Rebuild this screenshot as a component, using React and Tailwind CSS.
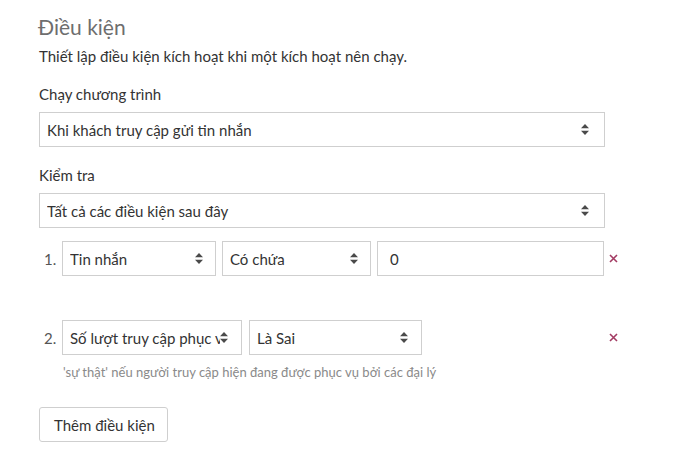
import React from "react";

function Arrows() {
  return (
    <svg width="8" height="11" viewBox="0 0 8 11" className="shrink-0 fill-[#4a4a4a]">
      <path d="M4 0L8 4.3H0Z" />
      <path d="M4 11L8 6.7H0Z" />
    </svg>
  );
}

function Remove() {
  return (
    <svg width="9" height="9" viewBox="0 0 9 9" className="shrink-0 stroke-[#a33b63]" strokeWidth="1.6">
      <path d="M1 1L8 8M8 1L1 8" />
    </svg>
  );
}

function Select({ value, className = "", pr = "pr-[12px]" }) {
  return (
    <div className={`flex h-[35px] items-center border border-[#cfcfcf] bg-white pl-[7px] ${pr} ${className}`}>
      <span className="min-w-0 flex-1 overflow-hidden whitespace-nowrap">{value}</span>
      <Arrows />
    </div>
  );
}

export default function App() {
  return (
    <div className="min-h-screen bg-white pl-[39px] pt-[13px] font-['Lato',sans-serif] text-[15px] leading-[20px] text-[#333]">
      <div className="w-[566px]">
        <h2 className="-ml-px text-[21px] leading-[28px] text-[#6e6e6e]">Điều kiện</h2>
        <p className="mt-[5px]">Thiết lập điều kiện kích hoạt khi một kích hoạt nên chạy.</p>

        <div className="mt-[18px]">Chạy chương trình</div>
        <Select className="mt-[8px] w-full" pr="pr-[15px]" value="Khi khách truy cập gửi tin nhắn" />

        <div className="mt-[18px]">Kiểm tra</div>
        <Select className="mt-[8px] w-full" pr="pr-[15px]" value="Tất cả các điều kiện sau đây" />
      </div>

      {/* condition rows */}
      <div className="mt-[13px] flex items-center">
        <span className="w-[23px] pl-[5px] text-[#555]">1.</span>
        <div className="flex w-[543px]">
          <Select className="w-[154px]" value="Tin nhắn" />
          <Select className="ml-[6px] w-[149px]" value="Có chứa" />
          <div className="ml-[6px] flex h-[35px] w-[227px] items-center border border-[#cfcfcf] pl-[12px]">0</div>
        </div>
        <span className="ml-[4px]">
          <Remove />
        </span>
      </div>

      <div className="mt-[44px] flex items-center">
        <span className="w-[23px] pl-[5px] text-[#555]">2.</span>
        <div className="flex w-[543px]">
          <Select className="w-[180px]" pr="pr-[13px]" value="Số lượt truy cập phục vụ" />
          <Select className="ml-[7px] w-[173px]" pr="pr-[13px]" value="Là Sai" />
        </div>
        <span className="ml-[4px]">
          <Remove />
        </span>
      </div>
      <div className="mt-[9px] pl-[24px] text-[13px] leading-[16px] text-[#8a8a8a]">
        'sự thật' nếu người truy cập hiện đang được phục vụ bởi các đại lý
      </div>

      <button className="mt-[27px] flex h-[35px] w-[129px] items-center rounded-[3px] border border-[#cfcfcf] bg-white pl-[14px] text-[15px] text-[#333]">
        Thêm điều kiện
      </button>
    </div>
  );
}
